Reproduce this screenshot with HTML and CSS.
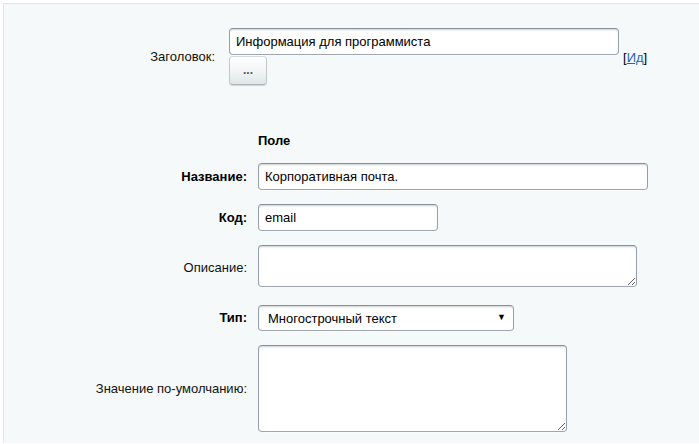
FILE: index.html
```html
<!DOCTYPE html>
<html lang="ru">
<head>
<meta charset="utf-8">
<title>Поле</title>
<link rel="stylesheet" href="styles.css">
</head>
<body>
<div class="panel">
  <div class="sec-title">
    <div class="lbl">Заголовок:</div>
    <div class="val-stack">
      <input class="inp inp-title" type="text" value="Информация для программиста">
      <button class="btn" type="button">...</button>
    </div>
    <div class="idlink">[<a href="#">Ид</a>]</div>
  </div>

  <div class="sec-field">
    <div class="lbl"></div>
    <div class="heading">Поле</div>

    <div class="lbl bold">Название:</div>
    <div class="val"><input class="inp inp-name" type="text" value="Корпоративная почта."></div>

    <div class="lbl bold">Код:</div>
    <div class="val"><input class="inp inp-code" type="text" value="email"></div>

    <div class="lbl">Описание:</div>
    <div class="val"><textarea class="inp ta ta-desc"></textarea></div>

    <div class="lbl bold">Тип:</div>
    <div class="val"><div class="sel-wrap"><select class="inp sel"><option>Многострочный текст</option></select></div></div>

    <div class="lbl">Значение по-умолчанию:</div>
    <div class="val"><textarea class="inp ta ta-def"></textarea></div>
  </div>
</div>
</body>
</html>
```

FILE: styles.css
```css
html, body {
  margin: 0;
  padding: 0;
  background: #ffffff;
}

body {
  font-family: "Liberation Sans", Arial, sans-serif;
  font-size: 13px;
  color: #000;
}

.panel {
  margin: 3px 0 0 3px;
  border-top: 1px solid #dfe5e8;
  border-left: 1px solid #dfe5e8;
  background: #f5f9f9;
  height: 440px;
  box-sizing: border-box;
}

.sec-title {
  display: grid;
  grid-template-columns: 211px 404px auto;
  column-gap: 0;
  padding-top: 24px;
  align-items: center;
}

.lbl {
  text-align: right;
  color: #111;
  line-height: 16px;
}

.bold {
  font-weight: bold;
  color: #000;
}

.val-stack {
  margin-left: 14px;
  display: flex;
  flex-direction: column;
  align-items: flex-start;
}

.idlink {
  padding-left: 4px;
  color: #000;
  padding-top: 2px;
}

.idlink a {
  color: #2067b0;
  text-decoration: underline;
}

.inp {
  box-sizing: border-box;
  font-family: "Liberation Sans", Arial, sans-serif;
  font-size: 13px;
  color: #000;
  background: #fff;
  border: 1px solid;
  border-color: #87919c #959ea9 #9ea7b1 #959ea9;
  border-radius: 4px;
  box-shadow: 0 1px 0 0 rgba(255,255,255,0.3), inset 0 2px 2px -1px rgba(180,188,191,0.7);
  padding: 0 6px;
  margin: 0;
  outline: none;
}

input.inp {
  height: 27px;
}

.inp-title { width: 390px; }
.inp-name { width: 390px; }
.inp-code { width: 180px; }

.btn {
  margin-top: 1px;
  width: 38px;
  height: 29px;
  box-sizing: border-box;
  border: 1px solid #c3cacd;
  border-color: #d3d9db #c3cacd #adb5b8 #c3cacd;
  border-radius: 4px;
  background: linear-gradient(to bottom, #ffffff 0%, #f1f4f5 55%, #dfe6e8 100%);
  box-shadow: 0 1px 1px rgba(0,0,0,0.15);
  font-family: "Liberation Sans", Arial, sans-serif;
  font-size: 12px;
  font-weight: bold;
  color: #555;
  padding: 0 0 2px 0;
  cursor: pointer;
}

.sec-field {
  display: grid;
  grid-template-columns: 243px auto;
  column-gap: 11px;
  row-gap: 14px;
  align-items: center;
  justify-items: stretch;
  margin-top: 48px;
}

.heading {
  font-weight: bold;
  line-height: 16px;
}

.val {
  display: flex;
  justify-content: flex-start;
}

.ta {
  display: block;
  padding: 4px 6px;
  resize: both;
}

.ta-desc {
  width: 379px;
  height: 42px;
  margin-bottom: 4px;
}

.ta-def {
  width: 309px;
  height: 87px;
}

.sel-wrap {
  position: relative;
  display: inline-block;
}

.sel {
  -webkit-appearance: none;
  appearance: none;
  width: 256px;
  height: 26px;
  padding: 0 24px 0 9px;
  cursor: pointer;
}

.sel-wrap::after {
  content: "▼";
  position: absolute;
  right: 8px;
  top: 7px;
  font-size: 9px;
  line-height: 10px;
  color: #000;
  pointer-events: none;
}
```
